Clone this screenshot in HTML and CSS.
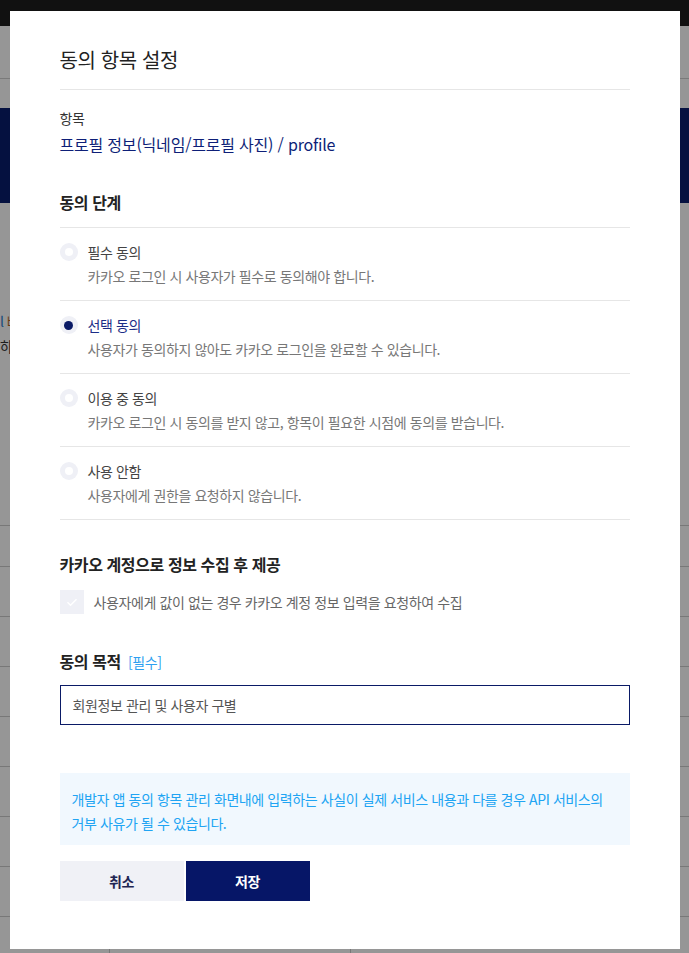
FILE: index.html
```html
<!DOCTYPE html>
<html lang="ko">
<head>
    <meta charset="UTF-8">
    <meta name="viewport" content="width=device-width, initial-scale=1.0">
    <title>동의 항목 설정</title>
    <link rel="stylesheet" href="styles.css">
</head>
<body>
<div class="page">
    <div class="topbar"></div>
    <div class="subnav"></div>
    <div class="banner"></div>
    <div class="intro">
        <p><span class="mark">l</span> <span class="warm">빠</span></p>
        <p>하<span class="warm">고</span></p>
    </div>
    <div class="table">
        <div class="row head"><span></span><span></span><span></span></div>
        <div class="row"><span></span><span></span><span></span></div>
        <div class="row"><span></span><span></span><span></span></div>
        <div class="row"><span></span><span></span><span></span></div>
        <div class="row"><span></span><span></span><span></span></div>
        <div class="row"><span></span><span></span><span></span></div>
        <div class="row"><span></span><span></span><span></span></div>
        <div class="row"><span></span><span></span><span></span></div>
        <div class="row"><span></span><span></span><span></span></div>
    </div>
</div>

<div class="overlay">
    <div class="modal">
        <div class="modal-head">
            <h1>동의 항목 설정</h1>
        </div>

        <div class="field-label">항목</div>
        <div class="field-value">프로필 정보(닉네임/프로필 사진) / profile</div>

        <h2 class="section-title">동의 단계</h2>
        <ul class="choices">
            <li class="choice">
                <span class="radio"></span>
                <div>
                    <div class="choice-name">필수 동의</div>
                    <div class="choice-desc">카카오 로그인 시 사용자가 필수로 동의해야 합니다.</div>
                </div>
            </li>
            <li class="choice selected">
                <span class="radio"></span>
                <div>
                    <div class="choice-name">선택 동의</div>
                    <div class="choice-desc">사용자가 동의하지 않아도 카카오 로그인을 완료할 수 있습니다.</div>
                </div>
            </li>
            <li class="choice">
                <span class="radio"></span>
                <div>
                    <div class="choice-name">이용 중 동의</div>
                    <div class="choice-desc">카카오 로그인 시 동의를 받지 않고, 항목이 필요한 시점에 동의를 받습니다.</div>
                </div>
            </li>
            <li class="choice">
                <span class="radio"></span>
                <div>
                    <div class="choice-name">사용 안함</div>
                    <div class="choice-desc">사용자에게 권한을 요청하지 않습니다.</div>
                </div>
            </li>
        </ul>

        <h2 class="section-title collect">카카오 계정으로 정보 수집 후 제공</h2>
        <div class="check-row">
            <span class="checkbox">
                <svg width="24" height="24" viewBox="0 0 24 24"><path d="M7.5 12.3l3 3L16.5 9.3" fill="none" stroke="#fff" stroke-width="1.5"/></svg>
            </span>
            <span class="check-text">사용자에게 값이 없는 경우 카카오 계정 정보 입력을 요청하여 수집</span>
        </div>

        <h2 class="section-title purpose">동의 목적 <span class="required">[필수]</span></h2>
        <div class="input">회원정보 관리 및 사용자 구별</div>

        <div class="notice">개발자 앱 동의 항목 관리 화면내에 입력하는 사실이 실제 서비스 내용과 다를 경우 API 서비스의 거부 사유가 될 수 있습니다.</div>

        <div class="buttons">
            <button class="btn cancel">취소</button>
            <button class="btn save">저장</button>
        </div>
    </div>
</div>
</body>
</html>
```

FILE: styles.css
```css
body {
    margin: 0;
    font-family: "Noto Sans CJK KR", "Noto Sans", sans-serif;
    letter-spacing: -0.025em;
    background: #fff;
    color: #333;
}

/* page under the dim layer */
.page {
    height: 953px;
    overflow: hidden;
}
.topbar {
    height: 26px;
    background: #1d1d1d;
}
.subnav {
    height: 52px;
    border-bottom: 1px solid #cfcfcf;
}
.banner {
    margin-top: 29px;
    height: 95px;
    background: #0a1d6e;
}
.intro {
    margin-top: 106px;
    font-size: 14px;
    line-height: 25px;
}
.intro p {
    margin: 0;
}
.intro .mark {
    color: #2a7dd0;
}
.intro .warm {
    color: #b5651d;
}
.table {
    margin-top: 166px;
}
.row {
    display: flex;
    height: 49px;
    border-top: 1px solid #ccc;
}
.row.head {
    height: 40px;
}
.row span:nth-child(1) {
    width: 109px;
    border-right: 1px solid #ccc;
}
.row span:nth-child(2) {
    width: 240px;
    border-right: 1px solid #ccc;
}

/* dim layer + modal */
.overlay {
    position: fixed;
    inset: 0;
    background: rgba(0, 0, 0, 0.41);
    display: flex;
    justify-content: center;
    align-items: flex-start;
}
.modal {
    margin-top: 11px;
    width: 670px;
    box-sizing: border-box;
    padding: 0 50px 48px;
    background: #fff;
}
.modal-head {
    padding: 37px 0 17px;
    border-bottom: 1px solid #e6e6e6;
}
h1 {
    margin: 0;
    font-size: 20px;
    line-height: 24px;
    font-weight: 400;
    color: #222;
}

.field-label {
    margin-top: 18px;
    font-size: 14px;
    line-height: 20px;
    color: #333;
}
.field-value {
    margin-top: 4px;
    font-size: 16px;
    line-height: 24px;
    letter-spacing: -0.2px;
    color: #0e1f78;
}

.section-title {
    margin: 35px 0 14px;
    font-size: 16px;
    line-height: 22px;
    font-weight: 700;
    color: #222;
}

.choices {
    list-style: none;
    margin: 0;
    padding: 0;
    border-top: 1px solid #e6e6e6;
}
.choice {
    display: flex;
    align-items: flex-start;
    gap: 10px;
    padding: 13px 0;
    border-bottom: 1px solid #e6e6e6;
}
.radio {
    flex: none;
    width: 18px;
    height: 18px;
    margin-top: 2px;
    border-radius: 50%;
    background: #eff0f6;
    display: flex;
    align-items: center;
    justify-content: center;
}
.radio::after {
    content: "";
    width: 8px;
    height: 8px;
    border-radius: 50%;
    background: #fff;
}
.choice.selected .radio::after {
    width: 9px;
    height: 9px;
    background: #0a1a66;
}
.choice-name {
    font-size: 14px;
    line-height: 22px;
    color: #444;
}
.choice.selected .choice-name {
    color: #1c2d87;
}
.choice-desc {
    margin-top: 2px;
    font-size: 14px;
    line-height: 22px;
    color: #777;
}

.section-title.collect {
    margin: 33px 0 15px;
}
.check-row {
    display: flex;
    align-items: center;
    gap: 10px;
}
.checkbox {
    width: 24px;
    height: 24px;
    background: #eff0f6;
    display: block;
}
.checkbox svg {
    display: block;
}
.check-text {
    font-size: 14px;
    color: #666;
}

.section-title.purpose {
    margin: 36px 0 12px;
}
.required {
    margin-left: 3px;
    font-weight: 400;
    font-size: 14px;
    color: #2e9ff0;
}

.input {
    height: 38px;
    border: 1px solid #0a1a66;
    padding: 0 12px;
    font-size: 14px;
    line-height: 38px;
    color: #555;
}

.notice {
    margin-top: 48px;
    padding: 14px 12px 10px;
    background: #f1f8fe;
    font-size: 14px;
    line-height: 24px;
    color: #20a4f3;
}

.buttons {
    display: flex;
    gap: 2px;
    margin-top: 16px;
}
.btn {
    width: 124px;
    height: 40px;
    border: none;
    font-family: inherit;
    letter-spacing: inherit;
    font-size: 14px;
    font-weight: 700;
    cursor: pointer;
}
.btn.cancel {
    background: #f0f1f6;
    color: #1f2552;
}
.btn.save {
    background: #061667;
    color: #fff;
}
```
